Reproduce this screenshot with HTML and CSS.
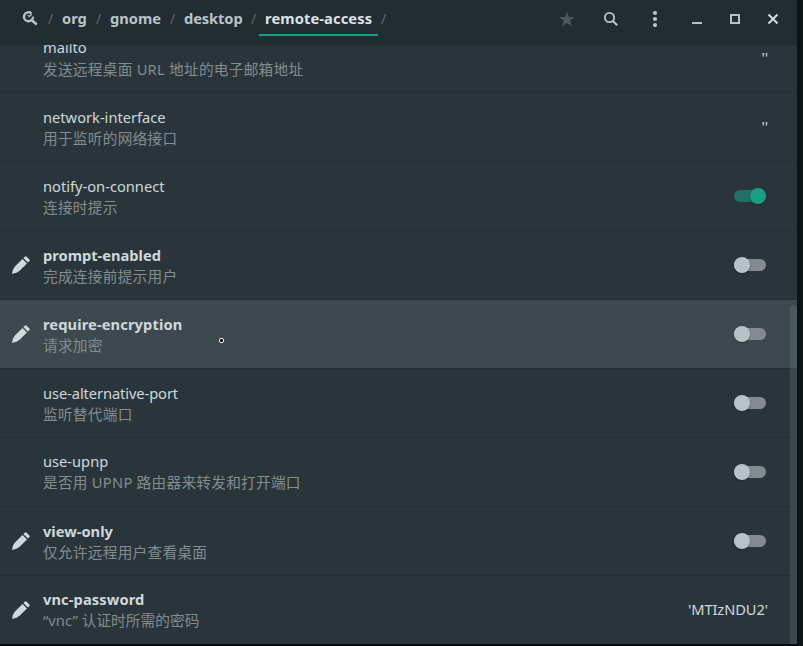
FILE: index.html
```html
<!DOCTYPE html>
<html lang="zh-CN">
<head>
<meta charset="utf-8">
<title>remote-access</title>
<link rel="stylesheet" href="styles.css">
</head>
<body>
<svg class="defs" width="0" height="0">
  <symbol id="pencil" viewBox="0 0 18 18">
    <path d="M12.700.700Q13.700-.2 14.700.800L17.300 3.400Q18.200 4.400 17.300 5.300L15.900 6.600L11.400 2.100ZM10.500 3L15 7.500L7.600 14.700Q5.200 16.900 0 18Q.8 12.900 2.700 10.800Z"/>
  </symbol>
</svg>
<div class="window">
  <header class="bar">
    <nav class="path">
      <svg class="root" width="16" height="16" viewBox="0 0 16 16"><path d="M9.400 2.300A4.500 4.500 0 1 0 11 5.600" fill="none" stroke="currentColor" stroke-width="2.300"/><path d="M5.500 4.300L7.200 5.500L10 3" fill="none" stroke="currentColor" stroke-width="1.300"/><path d="M9.500 8.900L14.800 13.500" stroke="currentColor" stroke-width="2.600"/></svg>
      <span class="sep s1">/</span><span class="crumb org">org</span>
      <span class="sep s2">/</span><span class="crumb gnome">gnome</span>
      <span class="sep s3">/</span><span class="crumb desktop">desktop</span>
      <span class="sep s4">/</span><span class="crumb current">remote-access</span>
      <span class="sep s5">/</span>
    </nav>
    <div class="actions">
      <svg class="star" width="16" height="16" viewBox="0 0 16 16"><path d="M8 .5L9.900 6H15.800L11.100 9.500L12.900 15.300L8 11.900L3.100 15.300L4.900 9.500L.2 6H6.100Z" fill="currentColor"/></svg>
      <svg class="search" width="16" height="16" viewBox="0 0 16 16"><circle cx="6.500" cy="6.500" r="4.600" fill="none" stroke="currentColor" stroke-width="1.900"/><path d="M9.700 9.700L14.200 14.200" stroke="currentColor" stroke-width="2"/></svg>
      <svg class="more" width="16" height="16" viewBox="0 0 16 16" fill="currentColor"><circle cx="8" cy="2" r="2.100"/><circle cx="8" cy="8" r="2.100"/><circle cx="8" cy="14" r="2.100"/></svg>
      <svg class="min" width="16" height="16" viewBox="0 0 16 16"><path d="M3 11h10v2H3z" fill="currentColor"/></svg>
      <svg class="max" width="16" height="16" viewBox="0 0 16 16"><path d="M4 4h8v8H4z" fill="none" stroke="currentColor" stroke-width="2"/></svg>
      <svg class="close" width="16" height="16" viewBox="0 0 16 16"><path d="M3.500 3.500L12.500 12.500M12.500 3.500L3.500 12.500" stroke="currentColor" stroke-width="2.100"/></svg>
    </div>
  </header>
  <main class="list">
    <div class="row first"><div class="icon"></div><div class="text"><div class="name">mailto</div><div class="desc">发送远程桌面 URL 地址的电子邮箱地址</div></div><div class="value">''</div></div>
    <div class="row"><div class="icon"></div><div class="text"><div class="name">network-interface</div><div class="desc">用于监听的网络接口</div></div><div class="value">''</div></div>
    <div class="row"><div class="icon"></div><div class="text"><div class="name">notify-on-connect</div><div class="desc">连接时提示</div></div><div class="switch on"></div></div>
    <div class="row set"><div class="icon"><svg width="18" height="18"><use href="#pencil"/></svg></div><div class="text"><div class="name">prompt-enabled</div><div class="desc">完成连接前提示用户</div></div><div class="switch"></div></div>
    <div class="row set hover"><div class="icon"><svg width="18" height="18"><use href="#pencil"/></svg></div><div class="text"><div class="name spaced">require-encryption</div><div class="desc">请求加密</div></div><div class="switch"></div></div>
    <div class="row"><div class="icon"></div><div class="text"><div class="name tight">use-alternative-port</div><div class="desc">监听替代端口</div></div><div class="switch"></div></div>
    <div class="row raised"><div class="icon"></div><div class="text"><div class="name">use-upnp</div><div class="desc">是否用 UPNP 路由器来转发和打开端口</div></div><div class="switch"></div></div>
    <div class="row set"><div class="icon"><svg width="18" height="18"><use href="#pencil"/></svg></div><div class="text"><div class="name">view-only</div><div class="desc">仅允许远程用户查看桌面</div></div><div class="switch"></div></div>
    <div class="row set raised"><div class="icon"><svg width="18" height="18"><use href="#pencil"/></svg></div><div class="text"><div class="name spaced">vnc-password</div><div class="desc tight">“vnc” 认证时所需的密码</div></div><div class="value wide">'MTIzNDU2'</div></div>
    <div class="scrollbar"></div>
    <div class="pointer"></div>
  </main>
</div>
</body>
</html>
```
FILE: styles.css
```css
* { box-sizing: border-box; }
body {
  margin: 0;
  height: 646px;
  overflow: hidden;
  background: linear-gradient(to right, #080c0e 797px, #0b1012 797px, #12181b 803px);
  font-family: "Noto Sans", "Noto Sans CJK SC", sans-serif;
  font-size: 14.67px;
  color: #cfd8dc;
}
.defs { position: absolute; }
.window {
  width: 797px;
  height: 644px;
  display: flex;
  flex-direction: column;
  overflow: hidden;
  background: #2a353b;
}
.bar {
  height: 44px;
  flex: none;
  display: flex;
  justify-content: space-between;
  background: #222d32;
  border-bottom: 1px solid #1f292d;
  box-shadow: 0 1px 3px rgba(0, 0, 0, .22);
  position: relative;
  z-index: 1;
}
.path { display: flex; padding-left: 22px; height: 36px; line-height: 37px; }
.path .root { margin: 11px 10px 0 0; color: #b7c1c6; }
.sep { width: 5px; color: #5d686d; font-size: 14px; }
.crumb { font-weight: 700; color: #b9c3c8; white-space: nowrap; }
.org { margin-left: 9px; width: 34px; }
.gnome { margin-left: 9px; width: 60px; }
.desktop { margin-left: 9px; width: 67px; letter-spacing: -.1px; }
.current { margin-left: 3px; width: 119px; padding-left: 6px; border-bottom: 2px solid #1a9f86; color: #dbe3e7; letter-spacing: .12px; }
.s5 { margin-left: 3px; }
.actions { display: flex; padding: 11px 16px 0 0; color: #b7c2c7; }
.star { color: #4c575d; margin-right: 28px; }
.search { margin-right: 28px; }
.more { margin-right: 26px; }
.min, .max { margin-right: 22px; }
.close { color: #cfd8dc; }
.list { flex: 1; min-height: 0; position: relative; }
.row { height: 69px; display: flex; align-items: center; border-bottom: 1px solid #242f34; padding-right: 31px; }
.first { margin-top: -20px; }
.icon { width: 43px; padding-left: 12px; display: flex; }
.icon svg { fill: #cfd8dc; }
.text { flex: 1; padding-top: 2px; }
.raised .text, .first .text { padding-top: 0; }
.first .desc { margin-top: 1px; margin-bottom: -1px; }
.name { line-height: 21px; height: 21px; white-space: nowrap; }
.name.spaced { letter-spacing: .11px; }
.name.tight { letter-spacing: -.08px; }
.set .name { font-weight: 700; }
.desc { line-height: 21px; height: 21px; color: #838c8e; letter-spacing: .27px; white-space: nowrap; }
.desc.tight { letter-spacing: .08px; }
.hover { background: #3d494e; }
.value { padding-bottom: 2px; margin-right: -2px; }
.wide { letter-spacing: -.08px; }
.switch { width: 32px; height: 12px; border-radius: 6px; background: #838b91; display: flex; align-items: center; }
.switch::before { content: ""; width: 16px; height: 16px; border-radius: 50%; background: #b9c1c9; box-shadow: 0 1px 2px rgba(0, 0, 0, .3); }
.switch.on { background: #217065; justify-content: flex-end; }
.switch.on::before { background: #1a9f86; }
.scrollbar { position: absolute; right: 0; top: 262px; width: 7px; bottom: 0; background: rgba(124, 145, 141, .22); }
.pointer { position: absolute; left: 219px; top: 294px; width: 5px; height: 5px; border: 1px solid #fff; border-radius: 2px; background: #000; }
```
